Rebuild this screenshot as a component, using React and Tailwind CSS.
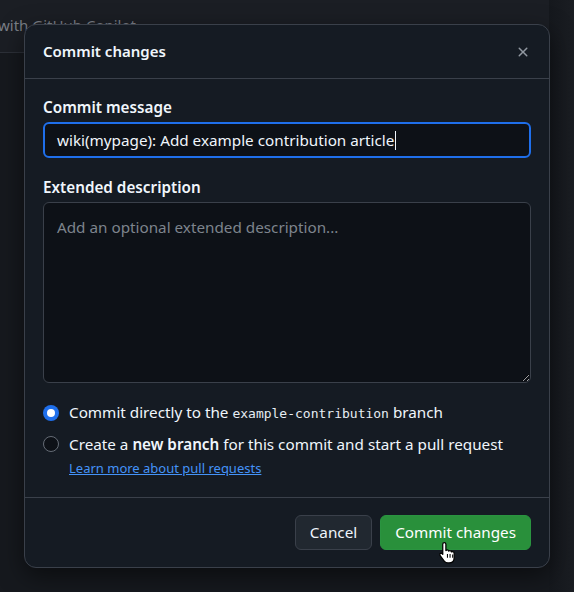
import React from "react";

const font = { fontFamily: '"Noto Sans", "Open Sans", sans-serif' };

function CloseIcon() {
  return (
    <svg width="16" height="16" viewBox="0 0 16 16" fill="#9198a1">
      <path d="M3.72 3.72a.75.75 0 0 1 1.06 0L8 6.94l3.22-3.22a.749.749 0 0 1 1.275.326.749.749 0 0 1-.215.734L9.06 8l3.22 3.22a.749.749 0 0 1-.326 1.275.749.749 0 0 1-.734-.215L8 9.06l-3.22 3.22a.751.751 0 0 1-1.042-.018.751.751 0 0 1-.018-1.042L6.94 8 3.72 4.78a.75.75 0 0 1 0-1.06Z" />
    </svg>
  );
}

function HandCursor() {
  return (
    <svg width="21" height="23" viewBox="0 0 20 22">
      <path
        d="M6 1.5c.9 0 1.5.6 1.5 1.5v6.2c.3-.4.8-.6 1.3-.6.8 0 1.3.5 1.4 1.1.3-.3.7-.5 1.2-.5.8 0 1.3.5 1.4 1.2.3-.2.6-.3 1-.3 1 0 1.6.7 1.6 1.6v4.3c0 3-2 5-5 5H9.5c-1.6 0-2.7-.6-3.6-1.8L2 13.9c-.5-.7-.4-1.5.2-1.9.6-.4 1.4-.3 1.9.3l.4.5V3c0-.9.6-1.5 1.5-1.5Z"
        fill="#fff"
        stroke="#000"
        strokeWidth="1.2"
        strokeLinejoin="round"
      />
      <path d="M9 12.5v3.5M11.5 12.5v3.5M14 13v3" stroke="#000" strokeWidth="1" />
    </svg>
  );
}

export default function App() {
  return (
    <div className="relative w-[574px] h-[592px] overflow-hidden bg-[#16191e]" style={font}>
      {/* page behind backdrop */}
      <div className="h-[53px] bg-[#1b1e24] border-b border-[#2c3038] flex items-start pt-[15px]">
        <span className="text-[15px] text-[#7a7f87] -ml-[2px] leading-[20px] whitespace-nowrap">with GitHub Copilot</span>
      </div>
      <div className="absolute top-0 right-0 w-[25px] h-full bg-gradient-to-r from-[#15181d] to-[#1a1d22]" />

      {/* dialog */}
      <div className="absolute left-[24px] top-[24px] w-[526px] h-[544px] flex flex-col rounded-[12px] border border-[#3a404a] bg-[#151b23] shadow-[0_8px_24px_rgba(0,0,0,0.5)]">
        <div className="h-[54px] shrink-0 flex items-center justify-between pl-[18px] pr-[18px] border-b border-[#3a404a]">
          <h2 className="text-[15px] font-semibold text-[#f0f6fc] leading-[20px] -mt-[2px]">Commit changes</h2>
          <CloseIcon />
        </div>

        <div className="flex-1 flex flex-col px-[18px] pt-[18px]">
          <label className="text-[15.25px] font-semibold text-[#f0f6fc] leading-[20px]">Commit message</label>
          <div className="mt-[5px] h-[36px] flex items-center rounded-[6px] border-2 border-[#1f6feb] bg-[#0d1117] px-[12px]">
            <span className="text-[15.25px] text-[#f0f6fc] leading-[20px] whitespace-nowrap">
              wiki(mypage): Add example contribution article
            </span>
            <span className="w-px h-[19px] bg-[#f0f6fc] ml-px" />
          </div>

          <label className="mt-[19px] text-[15.25px] font-semibold text-[#f0f6fc] leading-[20px]">Extended description</label>
          <textarea
            className="mt-[5px] h-[181px] rounded-[6px] border border-[#3a404a] bg-[#0d1117] px-[13px] py-[14px] text-[15.25px] leading-[20px] text-[#f0f6fc] placeholder:text-[#7d848d] outline-none resize-y [color-scheme:dark]"
            style={font}
            placeholder="Add an optional extended description..."
          />

          <div className="mt-[20px] flex items-center gap-[10px] h-[20px]">
            <span className="w-[16px] h-[16px] rounded-full bg-[#1f6feb] flex items-center justify-center">
              <span className="w-[8px] h-[8px] rounded-full bg-white" />
            </span>
            <span className="text-[15.25px] text-[#f0f6fc] leading-[20px] whitespace-nowrap">
              Commit directly to the{" "}
              <span className="text-[13px] text-[#e6edf3]" style={{ fontFamily: '"DejaVu Sans Mono", monospace' }}>
                example-contribution
              </span>{" "}
              branch
            </span>
          </div>

          <div className="mt-[11px] flex items-start gap-[10px]">
            <span className="mt-[2px] w-[16px] h-[16px] rounded-full border border-[#656c76] bg-[#0d1117]" />
            <div className="flex flex-col">
              <span className="text-[15.25px] text-[#f0f6fc] leading-[20px] whitespace-nowrap">
                Create a <span className="font-semibold">new branch</span> for this commit and start a pull request
              </span>
              <span className="mt-[5px] text-[13px] leading-[18px] text-[#4493f8] underline">Learn more about pull requests</span>
            </div>
          </div>
        </div>

        <div className="h-[70px] shrink-0 flex items-center justify-end gap-[8px] pr-[18px] border-t border-[#3a404a]">
          <button className="h-[35px] -mt-[1px] px-[14px] rounded-[6px] border border-[#3a404a] bg-[#212830] text-[15.25px] text-[#f0f6fc] leading-[20px]" style={font}>
            Cancel
          </button>
          <button className="h-[35px] -mt-[1px] px-[14px] rounded-[6px] border border-[#2a9440] bg-[#29903b] text-[15.25px] text-white leading-[20px]" style={font}>
            Commit changes
          </button>
        </div>
      </div>

      <div className="absolute left-[438px] top-[541px]">
        <HandCursor />
      </div>
    </div>
  );
}
